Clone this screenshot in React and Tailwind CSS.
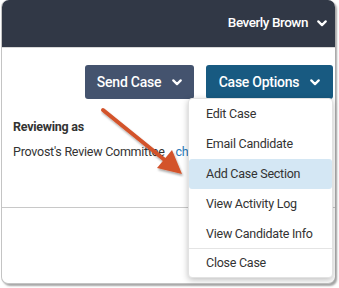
import React from "react";

const Chevron = ({ className = "" }) => (
  <svg viewBox="0 0 10 7" className={className} fill="none" stroke="currentColor" strokeWidth="2.2" strokeLinecap="round" strokeLinejoin="round">
    <path d="M1.3 1.4 L5 5.1 L8.7 1.4" />
  </svg>
);

const items = [
  "Edit Case",
  "Email Candidate",
  "Add Case Section",
  "View Activity Log",
  "View Candidate Info",
];

export default function App() {
  return (
    <div className="w-[339px] h-[288px] bg-white relative overflow-hidden" style={{ fontFamily: "Roboto, 'Liberation Sans', sans-serif" }}>
      <div className="ml-[1px] w-[334px] h-[284px] rounded-[7px] border-l border-b border-[#c4c4c4] bg-white flex flex-col shadow-[2px_2px_2px_rgba(0,0,0,0.35)] relative">
        <div className="h-[47px] bg-[#313846] rounded-t-[7px] flex items-center justify-end pr-[8px] border-b border-[#d8d8d8] box-content">
          <span className="text-white text-[13.5px] font-medium tracking-[-0.45px] mt-[-2px]">Beverly Brown</span>
          <Chevron className="w-[10px] h-[7px] text-white ml-[9px] mt-[-1px]" />
        </div>
        <div className="flex justify-end gap-[12px] pr-[2px] mt-[17px]">
          <button className="w-[109px] h-[34px] rounded-[3px] bg-[#44536e] text-white text-[14px] tracking-[-0.25px] font-medium flex items-center justify-center gap-[11px]">
            <span>Send Case</span>
            <Chevron className="w-[10px] h-[7px]" />
          </button>
          <div className="relative">
            <button className="w-[127px] h-[34px] rounded-[3px] bg-[#185a81] text-white text-[14px] tracking-[-0.25px] font-medium flex items-center justify-center gap-[11px]">
              <span>Case Options</span>
              <Chevron className="w-[10px] h-[7px]" />
            </button>
            <div className="absolute left-[-18px] top-[33px] w-[145px] bg-white rounded-[4px] border border-[#e2e2e2] shadow-[0_2px_6px_rgba(0,0,0,0.25)] z-10 text-[12.5px] tracking-[-0.25px] text-[#333]">
              {items.map((t, i) => (
                <div key={t} className={"h-[30px] flex items-center pl-[17px] rounded-[3px] " + (i === 2 ? "bg-[#d4e7f4]" : "")}>
                  {t}
                </div>
              ))}
              <div className="h-px bg-[#e4e4e4] mt-[-1px]" />
              <div className="h-[28px] flex items-center pl-[17px]">Close Case</div>
            </div>
          </div>
        </div>
        <div className="pl-[11px] mt-[20px] text-[12.5px] tracking-[-0.25px] text-[#333]">
          <div className="font-bold h-[16px] leading-[16px]">Reviewing as</div>
          <div className="mt-[9px] h-[16px] leading-[16px] whitespace-nowrap">
            Provost's Review Committee<span className="ml-[5px] text-[#555]">.</span> <span className="text-[#2b7bb9]">change</span>
          </div>
        </div>
        <div className="mt-[47px] h-px bg-[#c8c8c8]" />
      </div>
      <svg className="absolute left-0 top-0 pointer-events-none z-20" width="339" height="288" viewBox="0 0 339 288">
        <defs>
          <filter id="sh" x="-20%" y="-20%" width="140%" height="140%">
            <feDropShadow dx="1" dy="2" stdDeviation="1.2" floodColor="#000" floodOpacity="0.35" />
          </filter>
        </defs>
        <g filter="url(#sh)">
          <line x1="103" y1="110" x2="166" y2="161" stroke="#d3532b" strokeWidth="4" strokeLinecap="round" />
          <polygon points="182,174 157,168 172,150" fill="#d3532b" />
        </g>
      </svg>
    </div>
  );
}
